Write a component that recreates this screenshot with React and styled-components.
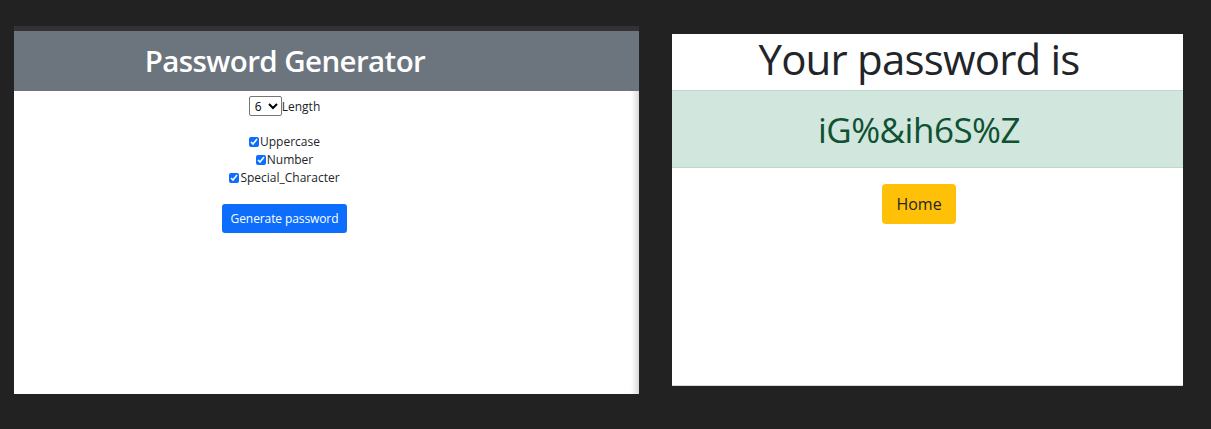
import React, { useState } from 'react';
import styled, { createGlobalStyle } from 'styled-components';

const GlobalStyle = createGlobalStyle`
  body {
    margin: 0;
    background-color: #222222;
    font-family: "Open Sans", "Noto Sans", sans-serif;
  }
`;

const Desktop = styled.div`
  display: flex;
  align-items: flex-start;
  gap: 33px;
  padding: 26px 0 0 14px;
  height: 429px;
  box-sizing: border-box;
  overflow: hidden;
`;

const GeneratorWindow = styled.div`
  width: 625px;
  height: 368px;
  background-color: #ffffff;
  display: flex;
  flex-direction: column;
  box-shadow: inset -7px 0 6px -4px rgba(0, 0, 0, 0.18);
  border-top: 5px solid #333335;
  box-sizing: border-box;
`;

const Header = styled.h1`
  margin: 0;
  height: 60px;
  padding: 0 83px 2px 0;
  box-sizing: border-box;
  background-color: #6c757d;
  color: #ffffff;
  font-size: 29.5px;
  font-weight: 600;
  letter-spacing: -0.6px;
  display: flex;
  align-items: center;
  justify-content: center;
`;

const Form = styled.form`
  display: flex;
  flex-direction: column;
  align-items: center;
  padding-right: 84px;
  padding-top: 5px;
  font-size: 12px;
  color: #212529;
`;

const LengthRow = styled.label`
  display: flex;
  align-items: center;
  height: 20px;
  margin-bottom: 17px;
`;

const Select = styled.select`
  width: 33px;
  height: 20px;
  font-size: 12px;
  font-family: "Open Sans", sans-serif;
  border: 1px solid #767676;
  border-radius: 2px;
  padding: 0 0 0 1px;
  background: #fff;
`;

const CheckRow = styled.label`
  display: flex;
  align-items: center;
  height: 18px;
  line-height: 18px;
`;

const Check = styled.input`
  width: 10px;
  height: 10px;
  margin: 0 1px 0 0;
  accent-color: #0d6efd;
`;

const PrimaryButton = styled.button`
  margin-top: 17px;
  width: 125px;
  height: 29px;
  border: none;
  border-radius: 3px;
  background-color: #0d6efd;
  color: #ffffff;
  font-family: "Open Sans", sans-serif;
  font-size: 12px;
  letter-spacing: -0.1px;
`;

const ResultWindow = styled.div`
  margin-top: 8px;
  width: 511px;
  height: 352px;
  background-color: #ffffff;
  border-bottom: 1px solid #d8d8d8;
  display: flex;
  flex-direction: column;
  align-items: stretch;
  box-sizing: border-box;
`;

const Title = styled.h2`
  margin: 0;
  height: 56px;
  padding: 0 17px 7px 0;
  box-sizing: border-box;
  display: flex;
  align-items: center;
  justify-content: center;
  font-size: 42px;
  line-height: 1;
  font-weight: 500;
  letter-spacing: -0.8px;
  color: #212529;
`;

const Alert = styled.div`
  height: 78px;
  box-sizing: border-box;
  padding-right: 17px;
  background-color: #d1e7dd;
  border-top: 1px solid #badbcc;
  border-bottom: 1px solid #badbcc;
  color: #0f5132;
  font-size: 35px;
  letter-spacing: -0.5px;
  display: flex;
  align-items: center;
  justify-content: center;
`;

const Actions = styled.div`
  display: flex;
  justify-content: center;
  padding: 16px 17px 0 0;
`;

const WarningButton = styled.button`
  width: 74px;
  height: 40px;
  border: none;
  border-radius: 4px;
  background-color: #ffc107;
  color: #212529;
  font-family: "Open Sans", sans-serif;
  font-size: 16px;
`;

const options = ['Uppercase', 'Number', 'Special_Character'];

export default function App() {
  const [length, setLength] = useState('6');
  const [checked, setChecked] = useState({ Uppercase: true, Number: true, Special_Character: true });

  return (
    <>
      <GlobalStyle />
      <Desktop>
        <GeneratorWindow>
          <Header>Password Generator</Header>
          <Form onSubmit={(e) => e.preventDefault()}>
            <LengthRow>
              <Select value={length} onChange={(e) => setLength(e.target.value)}>
                {[6, 7, 8, 9, 10, 11, 12].map((n) => (
                  <option key={n} value={n}>{n}</option>
                ))}
              </Select>
              Length
            </LengthRow>
            {options.map((name) => (
              <CheckRow key={name}>
                <Check
                  type="checkbox"
                  checked={checked[name]}
                  onChange={() => setChecked({ ...checked, [name]: !checked[name] })}
                />
                {name}
              </CheckRow>
            ))}
            <PrimaryButton type="submit">Generate password</PrimaryButton>
          </Form>
        </GeneratorWindow>
        <ResultWindow>
          <Title>Your password is</Title>
          <Alert>iG%&amp;ih6S%Z</Alert>
          <Actions>
            <WarningButton>Home</WarningButton>
          </Actions>
        </ResultWindow>
      </Desktop>
    </>
  );
}
